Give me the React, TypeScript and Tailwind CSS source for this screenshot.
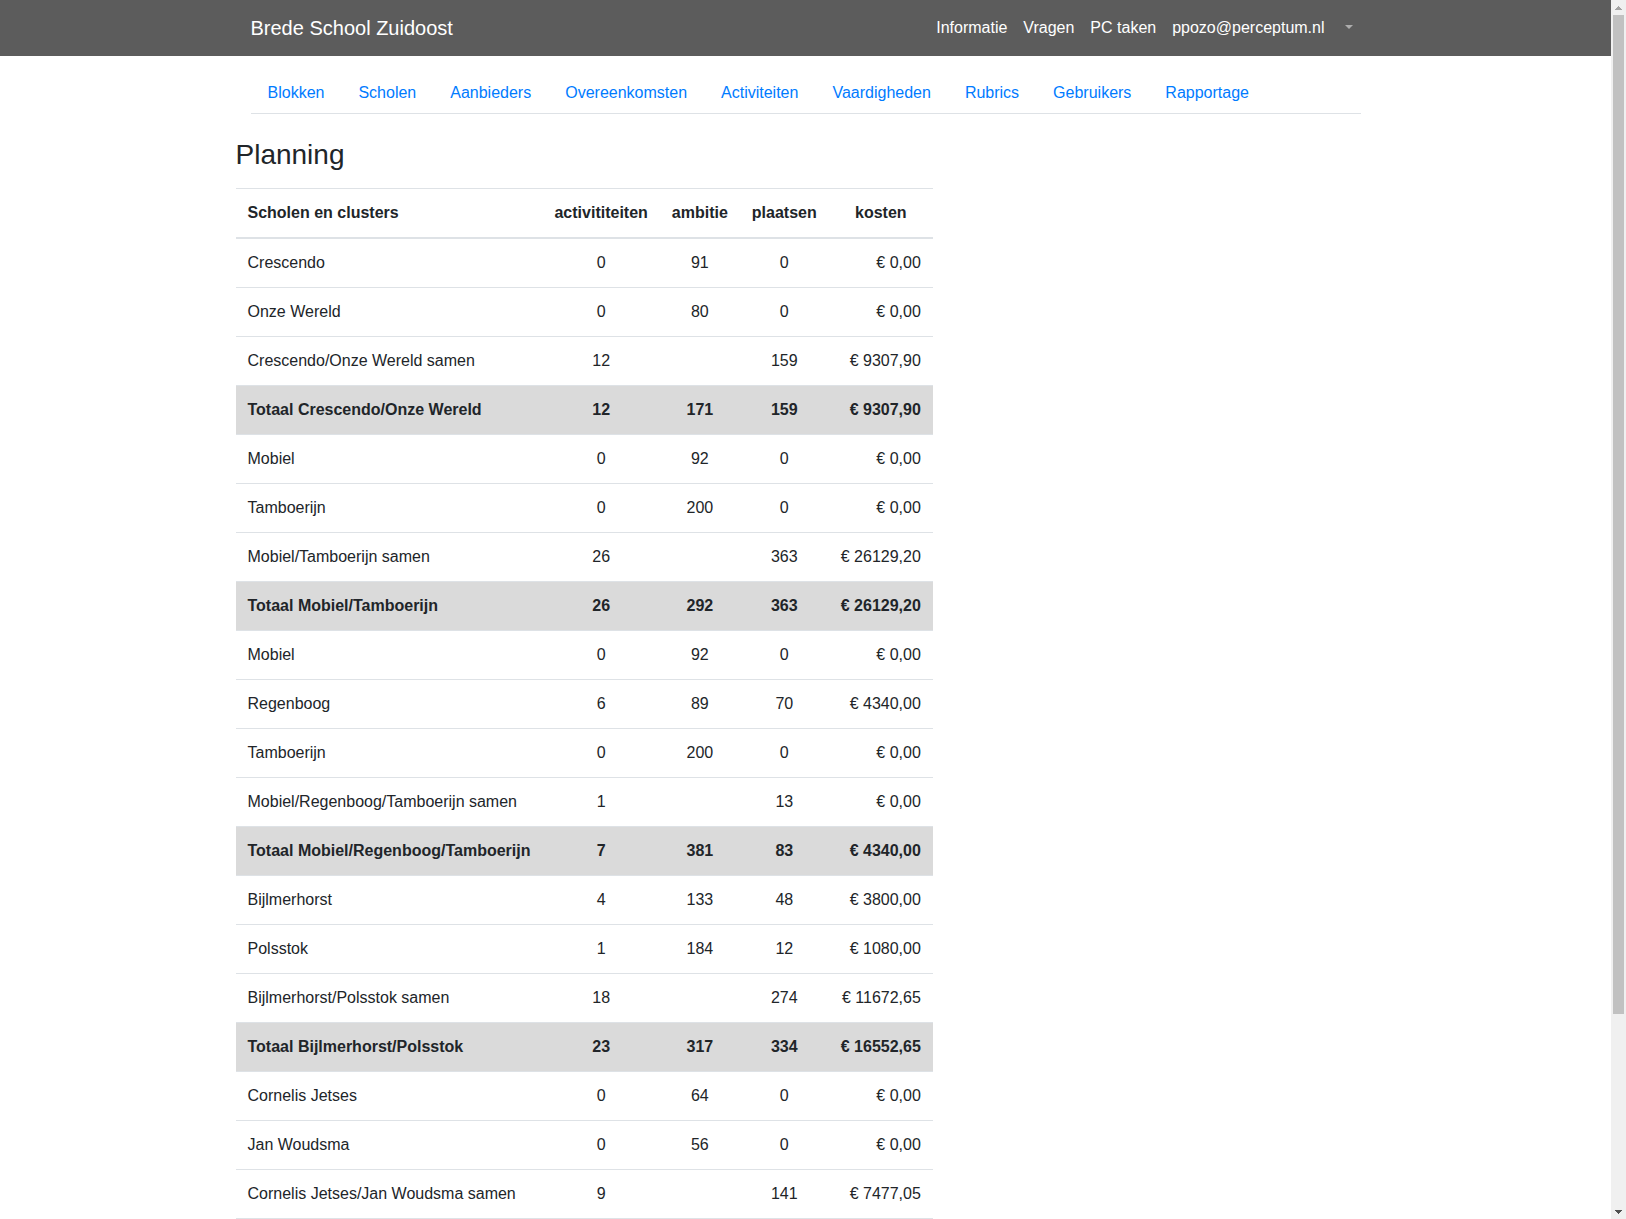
type Row = {
  name: string;
  activities: string;
  ambition: string;
  places: string;
  costs: string;
  total?: boolean;
};

const userLinks = ["Informatie", "Vragen", "PC taken", "ppozo@perceptum.nl"];

const tabs = [
  "Blokken",
  "Scholen",
  "Aanbieders",
  "Overeenkomsten",
  "Activiteiten",
  "Vaardigheden",
  "Rubrics",
  "Gebruikers",
  "Rapportage",
];

const rows: Row[] = [
  { name: "Crescendo", activities: "0", ambition: "91", places: "0", costs: "€ 0,00" },
  { name: "Onze Wereld", activities: "0", ambition: "80", places: "0", costs: "€ 0,00" },
  { name: "Crescendo/Onze Wereld samen", activities: "12", ambition: "", places: "159", costs: "€ 9307,90" },
  { name: "Totaal Crescendo/Onze Wereld", activities: "12", ambition: "171", places: "159", costs: "€ 9307,90", total: true },
  { name: "Mobiel", activities: "0", ambition: "92", places: "0", costs: "€ 0,00" },
  { name: "Tamboerijn", activities: "0", ambition: "200", places: "0", costs: "€ 0,00" },
  { name: "Mobiel/Tamboerijn samen", activities: "26", ambition: "", places: "363", costs: "€ 26129,20" },
  { name: "Totaal Mobiel/Tamboerijn", activities: "26", ambition: "292", places: "363", costs: "€ 26129,20", total: true },
  { name: "Mobiel", activities: "0", ambition: "92", places: "0", costs: "€ 0,00" },
  { name: "Regenboog", activities: "6", ambition: "89", places: "70", costs: "€ 4340,00" },
  { name: "Tamboerijn", activities: "0", ambition: "200", places: "0", costs: "€ 0,00" },
  { name: "Mobiel/Regenboog/Tamboerijn samen", activities: "1", ambition: "", places: "13", costs: "€ 0,00" },
  { name: "Totaal Mobiel/Regenboog/Tamboerijn", activities: "7", ambition: "381", places: "83", costs: "€ 4340,00", total: true },
  { name: "Bijlmerhorst", activities: "4", ambition: "133", places: "48", costs: "€ 3800,00" },
  { name: "Polsstok", activities: "1", ambition: "184", places: "12", costs: "€ 1080,00" },
  { name: "Bijlmerhorst/Polsstok samen", activities: "18", ambition: "", places: "274", costs: "€ 11672,65" },
  { name: "Totaal Bijlmerhorst/Polsstok", activities: "23", ambition: "317", places: "334", costs: "€ 16552,65", total: true },
  { name: "Cornelis Jetses", activities: "0", ambition: "64", places: "0", costs: "€ 0,00" },
  { name: "Jan Woudsma", activities: "0", ambition: "56", places: "0", costs: "€ 0,00" },
  { name: "Cornelis Jetses/Jan Woudsma samen", activities: "9", ambition: "", places: "141", costs: "€ 7477,05" },
];

function Navbar() {
  return (
    <header className="bg-[#5c5c5c] py-2 text-white">
      <div className="mx-auto flex max-w-[1140px] items-center justify-between px-[15px]">
        <a href="#" className="py-1 text-xl leading-8">
          Brede School Zuidoost
        </a>
        <nav className="flex items-center">
          {userLinks.map((label) => (
            <a key={label} href="#" className="px-2 py-2">
              {label}
            </a>
          ))}
          <button type="button" aria-label="Gebruikersmenu" className="flex h-10 items-center pr-2 pb-0.5 pl-3">
            <svg width="8" height="4" viewBox="0 0 8 4" className="fill-[#adadad]" aria-hidden="true">
              <path d="M0 0h8L4 4z" />
            </svg>
          </button>
        </nav>
      </div>
    </header>
  );
}

function Tabs() {
  return (
    <nav className="mx-[15px] mt-4 flex border-b border-[#dee2e6]">
      {tabs.map((label) => (
        <a key={label} href="#" className="px-[17px] pt-[9px] pb-2 text-[#007bff]">
          {label}
        </a>
      ))}
    </nav>
  );
}

function PlanningTable() {
  return (
    <table className="border-collapse">
      <thead>
        <tr className="border-t border-b-2 border-[#dee2e6]">
          <th className="p-3 text-left">Scholen en clusters</th>
          <th className="p-3">activititeiten</th>
          <th className="p-3">ambitie</th>
          <th className="p-3">plaatsen</th>
          <th className="p-3">kosten</th>
        </tr>
      </thead>
      <tbody>
        {rows.map((row, i) => (
          <tr
            key={i}
            className={
              row.total
                ? "border-b border-[#dee2e6] bg-[#dadada] font-bold"
                : "border-b border-[#dee2e6]"
            }
          >
            <td className="p-3">{row.name}</td>
            <td className="p-3 text-center">{row.activities}</td>
            <td className="p-3 text-center">{row.ambition}</td>
            <td className="p-3 text-center">{row.places}</td>
            <td className="p-3 text-right whitespace-nowrap">{row.costs}</td>
          </tr>
        ))}
      </tbody>
    </table>
  );
}

function Scrollbar() {
  return (
    <div className="flex w-[15px] shrink-0 flex-col bg-[#f0f0f0]" aria-hidden="true">
      <div className="flex h-[15px] items-center justify-center">
        <svg width="7" height="4" viewBox="0 0 7 4" className="fill-[#a3a3a3]" shapeRendering="crispEdges">
          <path d="M3 0h1v1h1v1h1v1h1v1H0V3h1V2h1V1h1z" />
        </svg>
      </div>
      <div className="flex flex-1 flex-col">
        <div className="mx-[2px] h-[84%] bg-[#c1c1c1]" />
      </div>
      <div className="flex h-[15px] items-center justify-center">
        <svg width="7" height="4" viewBox="0 0 7 4" className="fill-[#505050]" shapeRendering="crispEdges">
          <path d="M0 0h7v1H6v1H5v1H4v1H3V3H2V2H1V1H0z" />
        </svg>
      </div>
    </div>
  );
}

export default function App() {
  return (
    <div className="flex h-screen overflow-hidden bg-white font-['Liberation_Sans',Arial,sans-serif] text-base text-[#212529]">
      <div className="min-w-0 flex-1 overflow-hidden">
        <Navbar />
        <div className="mx-auto max-w-[1140px]">
          <Tabs />
          <main>
            <h1 className="mt-6 mb-4 text-[28px] leading-[34px]">Planning</h1>
            <PlanningTable />
          </main>
        </div>
      </div>
      <Scrollbar />
    </div>
  );
}
